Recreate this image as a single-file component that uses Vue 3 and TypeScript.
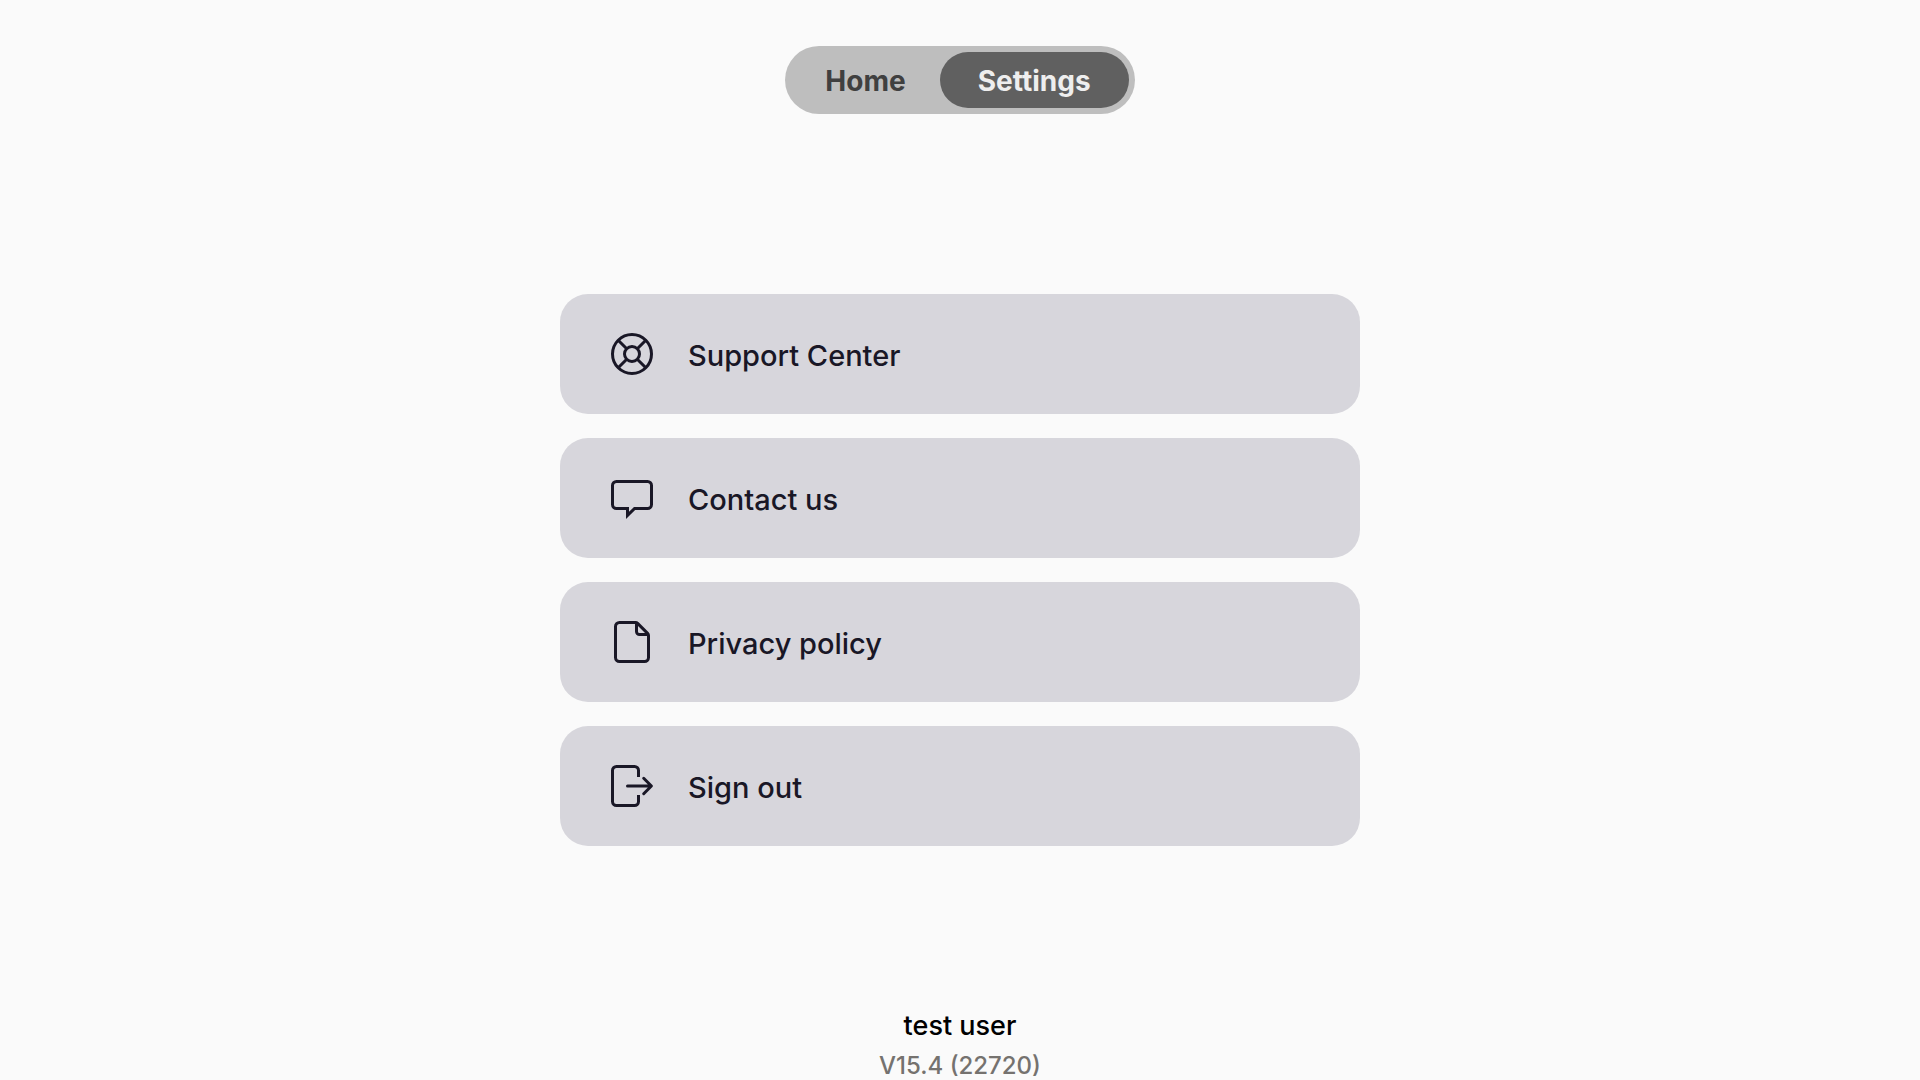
<script setup lang="ts">
import { ref } from 'vue'

interface Item {
  label: string
  paths: string[]
}

const tabs = ['Home', 'Settings']
const active = ref('Settings')

const items: Item[] = [
  {
    label: 'Support Center',
    paths: [
      'M4.5 24a19.5 19.5 0 1 0 39 0a19.5 19.5 0 1 0 -39 0z',
      'M16.5 24a7.5 7.5 0 1 0 15 0a7.5 7.5 0 1 0 -15 0z',
      'M10.2 10.2l8.5 8.5M37.8 10.2l-8.5 8.5M10.2 37.8l8.5-8.5M37.8 37.8l-8.5-8.5',
    ],
  },
  {
    label: 'Contact us',
    paths: [
      'M8.5 7.5H39.5a4 4 0 0 1 4 4V30.5a4 4 0 0 1-4 4H26.6L19.5 41.4V34.5H8.5a4 4 0 0 1-4-4V11.5a4 4 0 0 1 4-4z',
    ],
  },
  {
    label: 'Privacy policy',
    paths: [
      'M11.5 4.5H27.5a3 3 0 0 1 2.1 0.9L39.6 15.4a3 3 0 0 1 0.9 2.1V39.5a4 4 0 0 1-4 4H11.5a4 4 0 0 1-4-4V8.5a4 4 0 0 1 4-4z',
      'M28.5 4.5V13.5a3 3 0 0 0 3 3H40.5',
    ],
  },
  {
    label: 'Sign out',
    paths: [
      'M30.5 15V8.5a4 4 0 0 0-4-4H8.5a4 4 0 0 0-4 4V39.5a4 4 0 0 0 4 4H26.5a4 4 0 0 0 4-4V33',
    ],
  },
]
</script>

<template>
  <div class="page">
    <nav class="tabs" aria-label="Main">
      <button
        v-for="tab in tabs"
        :key="tab"
        type="button"
        class="tab"
        :class="{ active: tab === active }"
        @click="active = tab"
      >
        {{ tab }}
      </button>
    </nav>

    <main class="list">
      <button v-for="item in items" :key="item.label" type="button" class="card">
        <svg class="icon" viewBox="0 0 48 48" aria-hidden="true">
          <path v-for="d in item.paths" :key="d" :d="d" />
          <path v-if="item.label === 'Sign out'" class="round" d="M19.5 24H43M35.7 16.3L43.4 24L35.7 31.7" />
        </svg>
        <span>{{ item.label }}</span>
      </button>
    </main>

    <footer class="account">
      <p class="user">test user</p>
      <p class="version">V15.4 (22720)</p>
    </footer>
  </div>
</template>

<style>
body {
  margin: 0;
  background: #fafafa;
}
</style>

<style scoped>
.page {
  box-sizing: border-box;
  min-height: 100vh;
  padding-top: 46px;
  display: flex;
  flex-direction: column;
  align-items: center;
  font-family: Inter, "Liberation Sans", sans-serif;
}

.tabs {
  display: flex;
  padding: 6px;
  border-radius: 34px;
  background: #bebebe;
}

.tab {
  height: 56px;
  padding: 2px 34px 0;
  border: 0;
  border-radius: 28px;
  background: transparent;
  color: #404040;
  font: inherit;
  font-size: 28px;
  font-weight: 700;
  cursor: pointer;
}

.tab.active {
  padding: 2px 38px 0;
  background: #606060;
  color: #eeeeee;
}

.list {
  box-sizing: border-box;
  width: 100%;
  max-width: 800px;
  margin-top: 180px;
  display: flex;
  flex-direction: column;
  gap: 24px;
}

.card {
  display: flex;
  align-items: center;
  gap: 32px;
  height: 120px;
  padding: 2px 48px 0;
  border: 0;
  border-radius: 28px;
  background: #d7d6dc;
  color: #191726;
  font: inherit;
  font-size: 29px;
  font-weight: 500;
  text-align: left;
  cursor: pointer;
}

.icon {
  width: 48px;
  height: 48px;
  margin-bottom: 2px;
  flex: none;
  fill: none;
  stroke: currentColor;
  stroke-width: 3;
}

.round {
  stroke-linecap: round;
  stroke-linejoin: round;
}

.account {
  margin-top: 160px;
  text-align: center;
}

.user {
  margin: 0;
  color: #000000;
  font-size: 27px;
  line-height: 40px;
  font-weight: 500;
}

.version {
  margin: 8px 0 0;
  color: #75726f;
  font-size: 24px;
  line-height: 24px;
  font-weight: 500;
}
</style>
